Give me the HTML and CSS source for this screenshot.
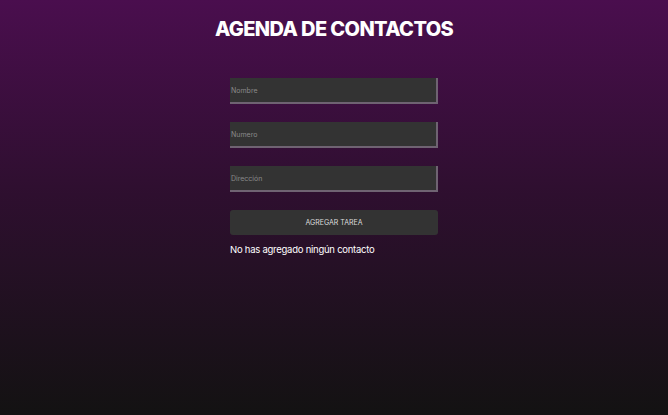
FILE: index.html
```html
<!DOCTYPE html>
<html lang="es">
<head>
<meta charset="utf-8">
<title>Agenda de contactos</title>
<link rel="stylesheet" href="styles.css">
</head>
<body>
<main class="app">
  <h1 class="title">AGENDA DE CONTACTOS</h1>
  <form class="form">
    <input class="field" type="text" placeholder="Nombre">
    <input class="field" type="text" placeholder="Numero">
    <input class="field" type="text" placeholder="Dirección">
    <button class="btn" type="button">AGREGAR TAREA</button>
  </form>
  <p class="empty">No has agregado ningún contacto</p>
</main>
</body>
</html>
```
FILE: styles.css
```css
html, body {
  margin: 0;
  height: 100%;
}
body {
  background: linear-gradient(to bottom, #4a0e4e 0%, #2f0f30 45%, #131212 100%);
  font-family: "Inter", "Open Sans", sans-serif;
  color: #fff;
}
.app {
  width: 208px;
  margin: 0 auto;
  padding-top: 16px;
  display: flex;
  flex-direction: column;
  align-items: center;
}
.title {
  margin: 0;
  white-space: nowrap;
  font-family: "Inter", "DejaVu Sans", sans-serif;
  font-weight: 800;
  font-size: 20px;
  line-height: 26px;
  letter-spacing: -0.6px;
  color: #fff;
}
.form {
  width: 208px;
  margin-top: 36px;
  display: flex;
  flex-direction: column;
  gap: 18px;
}
.field {
  box-sizing: border-box;
  width: 208px;
  height: 26px;
  margin: 0;
  padding: 0 1px;
  background: #333333;
  border: none;
  border-right: 2px solid #6f6372;
  border-bottom: 2px solid #6f6372;
  color: #ddd;
  font-family: "Inter", sans-serif;
  font-size: 7px;
  outline: none;
}
.field::placeholder {
  color: #8a8a8a;
}
.btn {
  box-sizing: border-box;
  width: 208px;
  height: 25px;
  margin: 0;
  background: #333333;
  border: none;
  border-radius: 3px;
  color: #ddd;
  font-family: "Inter", sans-serif;
  font-size: 7px;
  cursor: pointer;
}
.empty {
  align-self: stretch;
  margin: 8px 0 0;
  font-family: "Inter", sans-serif;
  font-size: 9.5px;
  letter-spacing: -0.25px;
  line-height: 14px;
  color: #fff;
}
```
